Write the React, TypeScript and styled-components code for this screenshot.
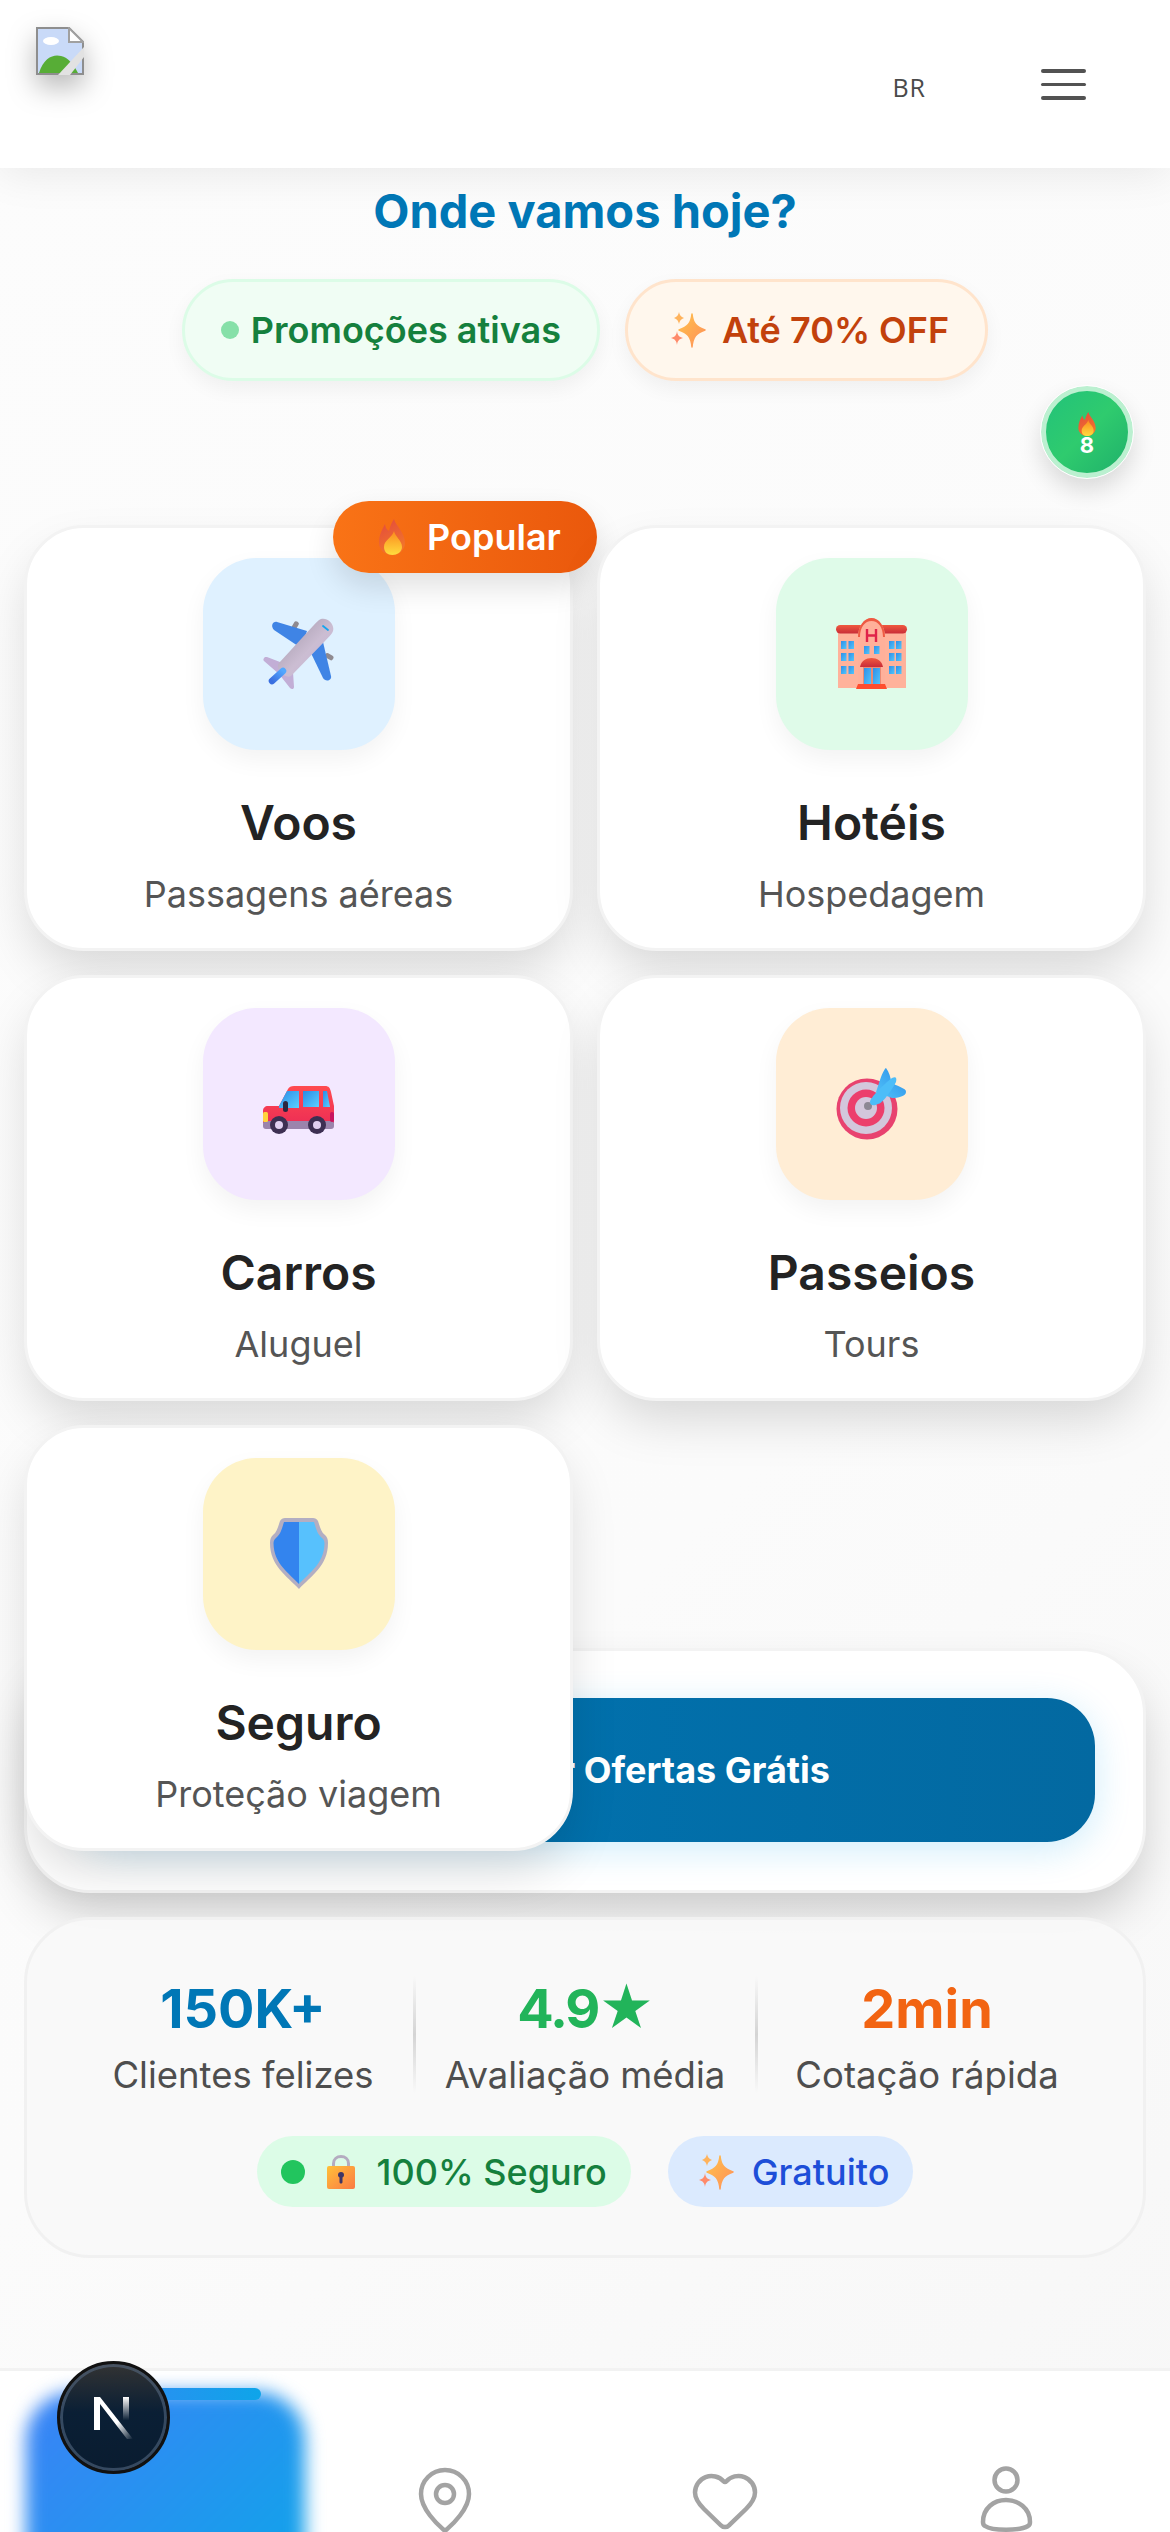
import React from "react";
import styled, { createGlobalStyle } from "styled-components";
import { Heart, MapPin } from "lucide-react";

const Global = createGlobalStyle`
  html, body { margin: 0; padding: 0; height: 100%; overflow: hidden; }
  body { font-family: Inter, "Liberation Sans", sans-serif; background: linear-gradient(135deg, #fcfcfc 0%, #fbfbfb 60%, #f7f7f7 100%); }
  * { box-sizing: border-box; }
`;

const Page = styled.div`
  width: 1170px;
  height: 2532px;
  position: relative;
  overflow: hidden;
`;

const Header = styled.header`
  height: 168px;
  background: #fff;
  box-shadow: 0 6px 40px rgba(0, 0, 0, 0.08);
  padding: 27px 84px 0 36px;
  display: flex;
  position: relative;
  z-index: 2;
`;

const BrokenLogo = styled.svg`
  width: 48px;
  height: 48px;
  filter: drop-shadow(0 12px 14px rgba(0, 0, 0, 0.28));
`;

const HeaderRight = styled.div`
  margin-left: auto;
  display: flex;
  align-items: flex-start;
  gap: 115px;
  padding-top: 42px;
`;

const Lang = styled.span`
  font-family: "Open Sans", sans-serif;
  font-size: 25px;
  line-height: 36px;
  font-weight: 500;
  color: #4a4a4a;
  letter-spacing: 1px;
`;

const Burger = styled.div`
  width: 45px;
  display: flex;
  flex-direction: column;
  gap: 10px;
`;

const BurgerLine = styled.span`
  display: block;
  height: 3.5px;
  border-radius: 2px;
  background: #525252;
`;

const Main = styled.main`
  padding: 13px 24px 0;
  position: relative;
`;

const Title = styled.h1`
  margin: 0;
  text-align: center;
  font-size: 47px;
  line-height: 60px;
  font-weight: 700;
  color: #0077b6;
`;

const PillRow = styled.div`
  display: flex;
  justify-content: center;
  gap: 25px;
  margin-top: 38px;
`;

const Pill = styled.div<{ $bg: string; $line: string; $color: string; $gap: number }>`
  height: 102px;
  padding: 0 36px;
  display: flex;
  align-items: center;
  gap: ${(p) => p.$gap}px;
  border-radius: 51px;
  background: ${(p) => p.$bg};
  border: 3px solid ${(p) => p.$line};
  color: ${(p) => p.$color};
  font-size: 36px;
  font-weight: 600;
  box-shadow: 0 8px 20px rgba(0, 0, 0, 0.05);
  white-space: nowrap;
`;

const Dot = styled.span<{ $color: string; $size: number }>`
  width: ${(p) => p.$size}px;
  height: ${(p) => p.$size}px;
  border-radius: 50%;
  background: ${(p) => p.$color};
  flex: none;
`;

const FloatBadge = styled.div`
  position: absolute;
  top: 218px;
  right: 37px;
  width: 92px;
  height: 92px;
  border-radius: 50%;
  background: linear-gradient(135deg, #22c27a 0%, #2fcb6e 50%, #1fb06a 100%);
  border: 5px solid #bbf0d0;
  outline: 1px solid #fff;
  box-shadow: 0 12px 24px rgba(0, 0, 0, 0.14);
  display: flex;
  flex-direction: column;
  align-items: center;
  justify-content: center;
  color: #fff;
  font-size: 22px;
  line-height: 18px;
  font-weight: 700;
  padding-top: 2px;
`;

const Grid = styled.section`
  display: grid;
  grid-template-columns: 1fr 1fr;
  grid-auto-rows: 426px;
  gap: 24px;
  height: 1099px;
  margin-top: 144px;
`;

const Card = styled.article`
  position: relative;
  z-index: 1;
  background: #fff;
  border: 3px solid #f3f3f3;
  border-radius: 60px;
  padding-top: 30px;
  display: flex;
  flex-direction: column;
  align-items: center;
  box-shadow: 0 24px 50px -6px rgba(0, 0, 0, 0.15);
`;

const IconBox = styled.div<{ $bg: string }>`
  width: 192px;
  height: 192px;
  border-radius: 54px;
  background: ${(p) => p.$bg};
  box-shadow: 0 10px 24px rgba(0, 0, 0, 0.05);
  display: flex;
  align-items: center;
  justify-content: center;
`;

const CardTitle = styled.h2`
  margin: 44px 0 0;
  font-size: 48px;
  line-height: 58px;
  font-weight: 600;
  color: #232323;
`;

const CardSub = styled.p`
  margin: 19px 0 0;
  font-size: 36px;
  line-height: 46px;
  font-weight: 400;
  color: #555;
`;

const PopularBadge = styled.div`
  position: absolute;
  top: -27px;
  right: -27px;
  width: 264px;
  height: 72px;
  border-radius: 36px;
  background: linear-gradient(90deg, #f97316, #ea580c);
  box-shadow: 0 14px 30px rgba(0, 0, 0, 0.12);
  color: #fff;
  font-size: 36px;
  font-weight: 600;
  display: flex;
  align-items: center;
  justify-content: center;
  gap: 22px;
  padding-left: 10px;
  z-index: 2;
`;

const CtaPanel = styled.section`
  height: 245px;
  margin-top: 24px;
  background: #fff;
  border: 3px solid #f3f3f3;
  border-radius: 66px;
  padding: 47px 48px;
  box-shadow: 0 25px 50px -6px rgba(0, 0, 0, 0.2);
`;

const CtaButton = styled.button`
  width: 100%;
  height: 144px;
  border: 0;
  border-radius: 48px;
  background: linear-gradient(90deg, #0077b6, #0369a1);
  box-shadow: 0 8px 36px rgba(14, 165, 233, 0.2);
  color: #fff;
  font-family: inherit;
  font-size: 36px;
  font-weight: 700;
  display: flex;
  align-items: center;
  justify-content: center;
  gap: 41px;
`;

const StatsPanel = styled.section`
  height: 341px;
  margin-top: 24px;
  background: rgba(249, 249, 249, 0.94);
  border: 3px solid #f1f1f1;
  border-radius: 66px;
  padding: 56px 45px 0;
  display: flex;
  flex-direction: column;
  align-items: center;
`;

const StatsRow = styled.div`
  display: grid;
  grid-template-columns: 1fr 1fr 1fr;
  width: 100%;
`;

const Stat = styled.div<{ $divider?: boolean }>`
  position: relative;
  display: flex;
  flex-direction: column;
  align-items: center;
  ${(p) =>
    p.$divider
      ? `&::after {
    content: "";
    position: absolute;
    right: -2px;
    top: 0;
    width: 3px;
    height: 117px;
    background: linear-gradient(180deg, transparent, #d4d4d4 50%, transparent);
  }`
      : ""}
`;

const StatValue = styled.div<{ $color: string; $tight?: boolean }>`
  font-size: 54px;
  line-height: 66px;
  font-weight: 700;
  color: ${(p) => p.$color};
  letter-spacing: ${(p) => (p.$tight ? "-2px" : "normal")};
`;

const StatLabel = styled.div`
  margin-top: 10px;
  font-size: 36.5px;
  line-height: 46px;
  color: #4e4e4e;
`;

const TrustRow = styled.div`
  display: flex;
  gap: 37px;
  margin-top: 38px;
`;

const TrustPill = styled.div<{ $bg: string; $color: string }>`
  height: 71px;
  padding: 0 24px;
  border-radius: 36px;
  background: ${(p) => p.$bg};
  color: ${(p) => p.$color};
  font-size: 36px;
  font-weight: 500;
  display: flex;
  align-items: center;
  gap: 12px;
`;

const BottomNav = styled.nav`
  position: absolute;
  left: 0;
  right: 0;
  bottom: 0;
  height: 164px;
  background: #fff;
  border-top: 3px solid #f2f2f2;
  padding: 0 24px;
  display: grid;
  grid-template-columns: repeat(4, 1fr);
  overflow: visible;
  z-index: 3;
`;

const NavTab = styled.div`
  position: relative;
  display: flex;
  justify-content: center;
  padding-top: 93px;
  color: #a3a3a3;
`;

const ActiveGlow = styled.div`
  position: absolute;
  left: 2px;
  right: 0;
  top: 21px;
  bottom: -60px;
  border-radius: 48px;
  background: linear-gradient(135deg, #3b82f6, #0ea5e9);
  filter: blur(9px);
`;

const ActiveBar = styled.div`
  position: absolute;
  left: 43px;
  top: 17px;
  width: 194px;
  height: 12px;
  border-radius: 6px;
  background: linear-gradient(90deg, #3b82f6, #0ea5e9);
`;

const NextBadge = styled.div`
  position: absolute;
  left: 57px;
  top: 2361px;
  width: 113px;
  height: 113px;
  border-radius: 50%;
  border: 3px solid #111;
  background: linear-gradient(180deg, #333 0%, #0a1f35 45%, #0a1c30 100%);
  box-shadow: inset 0 0 0 3px rgba(90, 110, 135, 0.55);
  display: flex;
  align-items: center;
  justify-content: center;
  z-index: 5;
`;

const Flame = ({ w, h }: { w: number; h: number }) => (
  <svg width={w} height={h} viewBox="0 0 26 36">
    <defs>
      <linearGradient id="flameOuter" x1="0" y1="0" x2="0.4" y2="1">
        <stop offset="0" stopColor="#e2483f" />
        <stop offset="1" stopColor="#f2752a" />
      </linearGradient>
      <linearGradient id="flameInner" x1="0.5" y1="0" x2="0.5" y2="1">
        <stop offset="0" stopColor="#fb8a1e" />
        <stop offset="1" stopColor="#ffdc3e" />
      </linearGradient>
    </defs>
    <path d="M15 0C16 6 26 13 26 24C26 31 20 36 13 36C6 36 0 31 0 24C0 16 3 11 6 5C6.500 9 8 11 10 12C11 7 13 3 15 0Z" fill="url(#flameOuter)" />
    <path d="M15 12C16 18 23 21 23 28C23 33 18 36 13.500 36C8.500 36 5 33 5 28C5 21 13 19 15 12Z" fill="url(#flameInner)" />
  </svg>
);

const Sparkles = () => (
  <svg width="48" height="48" viewBox="-6 -6 48 48">
    <defs>
      <linearGradient id="spark" x1="0" y1="0" x2="1" y2="1">
        <stop offset="0" stopColor="#ffc24a" />
        <stop offset="1" stopColor="#ff8f5a" />
      </linearGradient>
    </defs>
    <path d="M22 2C23 11 26 15 35 18C26 21 23 25 22 35C21 25 18 21 9 18C18 15 21 11 22 2Z" fill="url(#spark)" stroke="url(#spark)" strokeWidth="1.500" strokeLinejoin="round" />
    <path d="M9 0C9.500 3 11 5 14 6C11 7 9.500 9 9 12C8.500 9 7 7 4 6C7 5 8.500 3 9 0Z" fill="#ffb35c" />
    <path d="M7 19C7.500 23 9 25 13 26C9 27 7.500 29 7 33C6.500 29 5 27 1 26C5 25 6.500 23 7 19Z" fill="#ff8a6a" />
  </svg>
);

const PlaneIcon = () => (
  <svg width="72" height="72" viewBox="0 0 72 72">
    <defs>
      <linearGradient id="fuse" x1="0" y1="0" x2="1" y2="1">
        <stop offset="0" stopColor="#9d93a5" />
        <stop offset="0.55" stopColor="#cbbdd2" />
        <stop offset="1" stopColor="#c8b4d8" />
      </linearGradient>
      <linearGradient id="tailFin" x1="0" y1="1" x2="1" y2="0">
        <stop offset="0" stopColor="#3a6fe0" />
        <stop offset="1" stopColor="#52a8ff" />
      </linearGradient>
    </defs>
    <rect x="30" y="3" width="5" height="9" rx="2" fill="#8f8a90" transform="rotate(30 32 7)" />
    <rect x="62" y="36" width="9" height="5" rx="2" fill="#8f8a90" transform="rotate(30 66 38)" />
    <path d="M14 4L44 13L38 30L11 12C7 8 10 3 14 4Z" fill="#3f84e5" />
    <path d="M68 58C69 63 62 64 60 60L46 31L60 24Z" fill="#3f84e5" />
    <path d="M2 39C0 41 0 42 1 43L16 56L27 70C29 72 31 71 31 69L30 54L17 44L4 39Z" fill="#c2aed6" />
    <path d="M58 1C64 -1 72 6 70 13C69 16 65 20 62 23L28 58C25 60 20 57 17 54C15 51 14 47 16 45L50 8C52 6 55 2 58 1Z" fill="url(#fuse)" />
    <path d="M9 63L20 53" stroke="url(#tailFin)" strokeWidth="6.500" strokeLinecap="round" />
    <path d="M60 8L65 12" stroke="#14a5ef" strokeWidth="1.800" strokeLinecap="round" />
  </svg>
);

const HotelIcon = () => (
  <svg width="72" height="72" viewBox="0 0 72 72">
    <defs>
      <linearGradient id="roofH" x1="0" y1="0" x2="0" y2="1">
        <stop offset="0" stopColor="#f0593f" />
        <stop offset="1" stopColor="#c92c38" />
      </linearGradient>
      <linearGradient id="winH" x1="0" y1="0" x2="1" y2="1">
        <stop offset="0" stopColor="#2f8fe8" />
        <stop offset="1" stopColor="#52c6fb" />
      </linearGradient>
    </defs>
    <rect x="2" y="10" width="68" height="60" fill="#ffb29b" />
    <rect x="0" y="7" width="71" height="8.500" rx="4.200" fill="url(#roofH)" />
    <path d="M22 70V19C22 8 28 1 35.500 0C43 1 49 8 49 19V70Z" fill="#ffb09a" />
    <path d="M22 19C22 8 28 0 35.500 0C43 0 49 8 49 19L47 19C47 9 42 3 35.500 3C29 3 24 9 24 19Z" fill="#ee5a43" />
    <path d="M31 11V24M40 11V24M31 17.500H40" stroke="#e0234a" strokeWidth="2.400" fill="none" />
    {[5, 12.5, 53, 60].flatMap((x) =>
      [23, 35, 48].map((y) => <rect key={`${x}-${y}`} x={x} y={y} width="5.500" height="8" fill="url(#winH)" />),
    )}
    <rect x="28" y="28" width="5.500" height="8" fill="url(#winH)" />
    <rect x="38" y="28" width="5.500" height="8" fill="url(#winH)" />
    <rect x="27" y="48" width="18" height="19" fill="#e98a74" />
    <rect x="28" y="50" width="7" height="17" fill="url(#winH)" />
    <rect x="37" y="50" width="7" height="17" fill="url(#winH)" />
    <path d="M24 49C25 43 30 40 35.500 40C41 40 46 43 47 49Z" fill="url(#roofH)" />
    <path d="M20 71L22 66H49L51 71Z" fill="#ff4d2e" />
  </svg>
);

const CarIcon = () => (
  <svg width="72" height="72" viewBox="0 0 72 72">
    <defs>
      <linearGradient id="carBody" x1="0" y1="0" x2="0" y2="1">
        <stop offset="0" stopColor="#ff4b4f" />
        <stop offset="1" stopColor="#ee2f55" />
      </linearGradient>
      <linearGradient id="carGlass" x1="0" y1="0" x2="1" y2="1">
        <stop offset="0" stopColor="#2b8be6" />
        <stop offset="1" stopColor="#5bd0ff" />
      </linearGradient>
    </defs>
    <path d="M0 43C0 40 2 38 5 38H16L25 21C26 19 28 18 31 18H62C66 18 67 20 68 24L71 38V55H0Z" fill="url(#carBody)" />
    <rect x="0" y="53" width="71" height="8" rx="3" fill="#9b84ac" />
    <path d="M16 38L24 23H36V40H16Z" fill="url(#carGlass)" />
    <rect x="40" y="23" width="16" height="16" fill="url(#carGlass)" />
    <path d="M60 23H64L67 39H60Z" fill="url(#carGlass)" />
    <rect x="20" y="33" width="5" height="11" rx="2.500" fill="#2c2540" />
    <rect x="0" y="44" width="5" height="10" rx="1.500" fill="#ffd23d" />
    <rect x="67" y="44" width="4" height="10" rx="2" fill="#c8135f" />
    <circle cx="16" cy="57" r="9" fill="#3d2f52" />
    <circle cx="16" cy="57" r="4" fill="#e0cff0" />
    <circle cx="54" cy="57" r="9" fill="#3d2f52" />
    <circle cx="54" cy="57" r="4" fill="#e0cff0" />
  </svg>
);

const TargetIcon = () => (
  <svg width="72" height="72" viewBox="0 0 72 72">
    <defs>
      <linearGradient id="dart" x1="0" y1="1" x2="1" y2="0">
        <stop offset="0" stopColor="#52c6fb" />
        <stop offset="1" stopColor="#2b8be6" />
      </linearGradient>
    </defs>
    <circle cx="31" cy="41" r="30.500" fill="#e8426f" />
    <circle cx="30" cy="40" r="26" fill="#d3c7dc" />
    <circle cx="30" cy="40" r="18.500" fill="#ec3f6c" />
    <circle cx="30" cy="40" r="11" fill="#d3c7dc" />
    <circle cx="32" cy="38" r="4" fill="#8c8794" />
    <path d="M44 12C46 6 49 0 50 0C53 4 55 10 55 14C59 18 71 20 70 24C70 28 62 30 56 30L40 24Z" fill="url(#dart)" />
    <path d="M34 34C34 30 48 16 56 10C60 8 61 10 60 14C56 22 46 36 42 36C38 38 34 38 34 34Z" fill="#4cbdf8" />
  </svg>
);

const ShieldIcon = () => (
  <svg width="72" height="72" viewBox="0 0 72 72">
    <path d="M36 71C24 58 7 48 7 25C7 21 8 19 10 17C14 14 15 9 17 3C18 1 20 0 22 0H50C52 0 54 1 55 3C57 9 58 14 62 17C64 19 65 21 65 25C65 48 48 58 36 71Z" fill="#b3aec2" />
    <path d="M36 66C26 55 11 46 10.500 25.500C10.500 23 11.500 21 13 20C18 16 19 10 21 4H36Z" fill="#3384ee" />
    <path d="M36 66C46 55 61 46 61.500 25.500C61.500 23 60.500 21 59 20C54 16 53 10 51 4H36Z" fill="#57c1fd" />
  </svg>
);

const LockIcon = () => (
  <svg width="48" height="34" viewBox="-10 0 48 34">
    <defs>
      <linearGradient id="lockBody" x1="0" y1="0" x2="1" y2="1">
        <stop offset="0" stopColor="#ffc038" />
        <stop offset="1" stopColor="#fb7a45" />
      </linearGradient>
    </defs>
    <path d="M6.500 13V8.500C6.500 4 10 1.500 14 1.500C18 1.500 21.500 4 21.500 8.500V13" fill="none" stroke="#b4acc0" strokeWidth="3" />
    <rect x="0" y="11" width="28" height="23" rx="2" fill="url(#lockBody)" />
    <path d="M14 17C16 17 17 18 17 20C17 21 16.500 22 15.500 22.500L15.500 27C15.500 29 12.500 29 12.500 27L12.500 22.500C11.500 22 11 21 11 20C11 18 12 17 14 17Z" fill="#3f3566" />
  </svg>
);

const NextLogo = () => (
  <svg width="52" height="52" viewBox="0 0 52 52">
    <defs>
      <linearGradient id="nStem" x1="0" y1="0" x2="0" y2="1">
        <stop offset="0" stopColor="#fff" />
        <stop offset="0.9" stopColor="#fff" stopOpacity="0" />
      </linearGradient>
      <linearGradient id="nDiag" x1="0" y1="0" x2="1" y2="1">
        <stop offset="0.6" stopColor="#fff" />
        <stop offset="1" stopColor="#fff" stopOpacity="0" />
      </linearGradient>
    </defs>
    <path d="M6 5H12L45 47H39L12 12V38H6Z" fill="url(#nDiag)" />
    <rect x="35" y="5" width="6" height="26" fill="url(#nStem)" />
  </svg>
);

const UserIcon = () => (
  <svg width="72" height="72" viewBox="0 0 72 72" fill="none" stroke="currentColor" strokeWidth="4.500">
    <circle cx="36" cy="16" r="11.500" />
    <path d="M13 58C13 44 24 36 36 36C48 36 60 44 60 58C60 60 60 61 58 62C50 67 22 67 15 62C13 61 13 60 13 58Z" strokeLinejoin="round" />
  </svg>
);

const items = [
  { title: "Voos", sub: "Passagens aéreas", bg: "#dff1ff", icon: <PlaneIcon />, popular: true },
  { title: "Hotéis", sub: "Hospedagem", bg: "#dffbe9", icon: <HotelIcon /> },
  { title: "Carros", sub: "Aluguel", bg: "#f3e8ff", icon: <CarIcon /> },
  { title: "Passeios", sub: "Tours", bg: "#ffedd5", icon: <TargetIcon /> },
  { title: "Seguro", sub: "Proteção viagem", bg: "#fef3c7", icon: <ShieldIcon /> },
];

export default function App() {
  return (
    <Page>
      <Global />
      <Header>
        <BrokenLogo viewBox="0 0 48 48">
          <path d="M1 1H33L47 15V47H1Z" fill="#c9daf8" stroke="#8e8e8e" strokeWidth="2" />
          <path d="M33 1V15H47Z" fill="#fff" stroke="#a0a0a0" strokeWidth="2" />
          <ellipse cx="15" cy="14" rx="8" ry="4" fill="#fff" />
          <path d="M3 46C8 30 18 27 25 29C32 30 38 38 42 46Z" fill="#57ad36" />
          <path d="M22 48L48 20V30L34 48Z" fill="#e2e2e2" />
        </BrokenLogo>
        <HeaderRight>
          <Lang>BR</Lang>
          <Burger>
            <BurgerLine />
            <BurgerLine />
            <BurgerLine />
          </Burger>
        </HeaderRight>
      </Header>
      <Main>
        <Title>Onde vamos hoje?</Title>
        <PillRow>
          <Pill $bg="#f0fdf4" $line="#dcfce7" $color="#15803d" $gap={12}>
            <Dot $color="#86e0a8" $size={18} />
            Promoções ativas
          </Pill>
          <Pill $bg="#fff7ed" $line="#ffe4cc" $color="#c2410c" $gap={10}>
            <Sparkles />
            Até 70% OFF
          </Pill>
        </PillRow>
        <FloatBadge>
          <Flame w={18} h={24} />
          8
        </FloatBadge>
        <Grid>
          {items.map((it) => (
            <Card key={it.title}>
              {it.popular && (
                <PopularBadge>
                  <Flame w={26} h={36} />
                  Popular
                </PopularBadge>
              )}
              <IconBox $bg={it.bg}>{it.icon}</IconBox>
              <CardTitle>{it.title}</CardTitle>
              <CardSub>{it.sub}</CardSub>
            </Card>
          ))}
        </Grid>
        <CtaPanel>
          <CtaButton>
            <Sparkles />
            Receber Ofertas Grátis
          </CtaButton>
        </CtaPanel>
        <StatsPanel>
          <StatsRow>
            <Stat $divider>
              <StatValue $color="#0077b6">150K+</StatValue>
              <StatLabel>Clientes felizes</StatLabel>
            </Stat>
            <Stat $divider>
              <StatValue $color="#22b45a" $tight>
                4.9★
              </StatValue>
              <StatLabel>Avaliação média</StatLabel>
            </Stat>
            <Stat>
              <StatValue $color="#f26412">2min</StatValue>
              <StatLabel>Cotação rápida</StatLabel>
            </Stat>
          </StatsRow>
          <TrustRow>
            <TrustPill $bg="#dcfce7" $color="#15803d">
              <Dot $color="#22c55e" $size={24} />
              <LockIcon />
              100% Seguro
            </TrustPill>
            <TrustPill $bg="#dbeafe" $color="#1d4ed8">
              <Sparkles />
              Gratuito
            </TrustPill>
          </TrustRow>
        </StatsPanel>
      </Main>
      <BottomNav>
        <NavTab>
          <ActiveGlow />
          <ActiveBar />
        </NavTab>
        <NavTab>
          <MapPin size={72} strokeWidth={1.5} />
        </NavTab>
        <NavTab>
          <Heart size={72} strokeWidth={1.5} />
        </NavTab>
        <NavTab>
          <UserIcon />
        </NavTab>
      </BottomNav>
      <NextBadge>
        <NextLogo />
      </NextBadge>
    </Page>
  );
}
